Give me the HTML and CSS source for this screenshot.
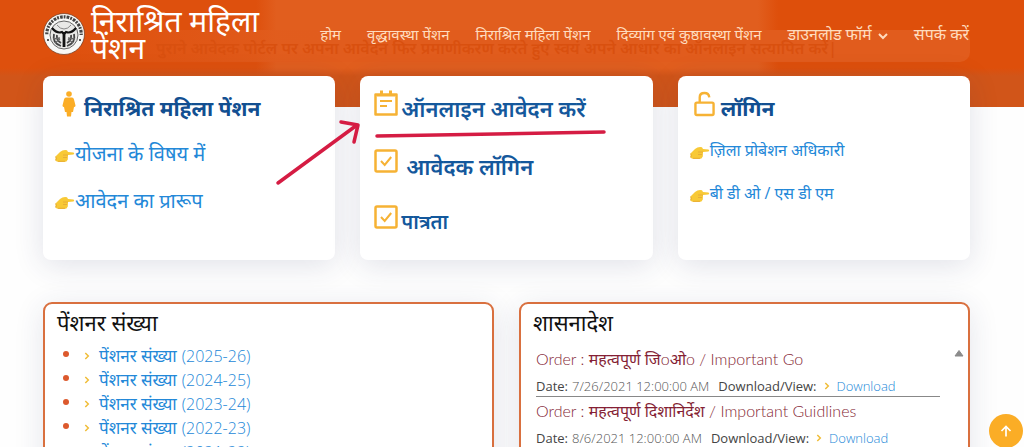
FILE: index.html
```html
<!DOCTYPE html>
<html lang="hi">
<head>
<meta charset="utf-8">
<meta name="viewport" content="width=device-width, initial-scale=1">
<title>निराश्रित महिला पेंशन</title>
<link rel="stylesheet" href="styles.css">
</head>
<body>
<svg class="symbols" aria-hidden="true">
  <symbol id="hand" viewBox="0 0 20 14">
    <path d="M1 7 L5 3 Q8 0.500 12 1.300 L13 3 L18.500 3.600 Q20 4.600 18.500 5.600 L13 6 L12.800 10.500 Q12 13 9 13 H4 Q1 13 0.500 11Z" fill="#f8c936"/>
    <path d="M8 6h5M8 8.500h4M3 12.300h7" stroke="#e2a73a" stroke-width="0.800" fill="none"/>
    <path d="M0.500 7.500 Q2 9 0.700 11.500" stroke="#e4aa32" fill="none"/>
  </symbol>
  <symbol id="check" viewBox="0 0 24 24">
    <rect x="1.500" y="1.500" width="21" height="21" rx="1.500" fill="none" stroke="#f6b234" stroke-width="2.500"/>
    <path d="M7 12l3.700 4 6.500-8" fill="none" stroke="#f6b234" stroke-width="2"/>
  </symbol>
  <symbol id="chevron" viewBox="0 0 6 8"><path d="M1.300 1l3 3-3 3" fill="none" stroke="#f0bd38" stroke-width="1.500"/></symbol>
</svg>

<header class="header">
  <p class="notice" aria-hidden="true">पुराने आवेदक पोर्टल पर अपना आवेदन फिर प्रमाणीकरण करते हुए स्वयं अपने आधार का ऑनलाइन सत्यापित करें|</p>
  <div class="bar">
    <svg class="logo" viewBox="0 0 42 42" role="img" aria-label="उत्तर प्रदेश सरकार">
      <circle cx="21" cy="21" r="20.500" fill="#f8f8f6" stroke="#6b3a22" stroke-width="0.700"/>
      <circle cx="21" cy="21" r="17.200" fill="none" stroke="#444" stroke-width="3.200" stroke-dasharray="1.800 1.100 2.700 1" pathLength="106" mask="url(#arc)"/>
      <mask id="arc"><rect width="42" height="22" fill="#fff"/></mask>
      <circle cx="21" cy="22" r="14" fill="#e9e9e7" stroke="#444" stroke-width="0.800"/>
      <path d="M9 15q5 6 10 4l2 2 2-2q5 2 10-4" fill="none" stroke="#111" stroke-width="2.200"/>
      <path d="M21 19v15" stroke="#111" stroke-width="2.800"/>
      <path d="M11 21q-2 9 7 12M31 21q2 9-7 12M14 22q-1 5 4 8M28 22q1 5-4 8" fill="none" stroke="#444" stroke-width="1.800"/>
      <path d="M10 26l7-1M12 30l5-4M32 26l-7-1M30 30l-5-4" stroke="#666" stroke-width="1.300"/>
      <path d="M14 12q3 4 7 4t7-4" fill="none" stroke="#888"/>
      <circle cx="5" cy="27" r="1" fill="#222"/><circle cx="37" cy="27" r="1" fill="#222"/>
    </svg>
    <h1 class="brand">निराश्रित महिला पेंशन</h1>
    <nav class="nav">
      <a href="#">होम</a>
      <a href="#">वृद्धावस्था पेंशन</a>
      <a href="#">निराश्रित महिला पेंशन</a>
      <a href="#">दिव्यांग एवं कुष्ठावस्था पेंशन</a>
      <a class="utility" href="#">डाउनलोड फॉर्म <svg class="caret" viewBox="0 0 10 7"><path d="M1 1l4 4 4-4" fill="none" stroke="currentColor" stroke-width="2"/></svg></a>
      <a class="utility" href="#">संपर्क करें</a>
    </nav>
  </div>
</header>

<main class="main">
  <section class="cards">
    <article class="card">
      <h2 class="card-title scheme">
        <svg class="woman" viewBox="0 0 14 26"><circle cx="7" cy="3" r="2.800" fill="#fbad26"/><path d="M4 6.500h6q1.500 0 2 2l1.500 6q0 1.500-1.500 1.500l-1 5h-1.500l-.5 4.500H5L4.500 21H3l-1-5Q.500 16 .500 14.500L2 8.500q.500-2 2-2Z" fill="#fbad26"/></svg>
        निराश्रित महिला पेंशन
      </h2>
      <ul class="links">
        <li><a href="#"><svg class="hand"><use href="#hand"/></svg>योजना के विषय में</a></li>
        <li><a href="#"><svg class="hand"><use href="#hand"/></svg>आवेदन का प्रारूप</a></li>
      </ul>
    </article>
    <article class="card actions">
      <a class="action first" href="#"><svg class="icon" viewBox="0 0 24 26"><path d="M1.500 4.500h21v20h-21Z" fill="none" stroke="#f6b234" stroke-width="2.500" stroke-linejoin="round"/><path d="M3 4.500h18v2H3ZM6 .500h3v5H6ZM15 .500h3v5h-3Z" fill="#f6b234"/><path d="M6 11h12M6 16h7" stroke="#f6b234" stroke-width="2"/></svg><span>ऑनलाइन आवेदन करें</span></a>
      <a class="action second" href="#"><svg class="icon"><use href="#check"/></svg><span>आवेदक लॉगिन</span></a>
      <a class="action third" href="#"><svg class="icon"><use href="#check"/></svg><span>पात्रता</span></a>
    </article>
    <article class="card">
      <h2 class="card-title">
        <svg class="lock" viewBox="0 0 22 26"><rect x="1.500" y="11.500" width="19" height="13" rx="1.500" fill="none" stroke="#f6b234" stroke-width="2.500"/><path d="M6 11V6q0-4.500 5-4.500 4.500 0 5 4.500" fill="none" stroke="#f6b234" stroke-width="2.500"/></svg>
        लॉगिन
      </h2>
      <ul class="links small">
        <li><a href="#"><svg class="hand"><use href="#hand"/></svg>ज़िला प्रोबेशन अधिकारी</a></li>
        <li><a href="#"><svg class="hand"><use href="#hand"/></svg>बी डी ओ / एस डी एम</a></li>
      </ul>
    </article>
    <svg class="marks" viewBox="0 0 340 80" aria-hidden="true">
      <g fill="none" stroke="#d51c43" stroke-linecap="round" stroke-linejoin="round">
        <path d="M8 67L87 9M71 6l17 3-4 17" stroke-width="3.500"/>
        <path d="M107 20Q200 18 334 16" stroke-width="3.500"/>
      </g>
    </svg>
  </section>

  <section class="panels">
    <article class="panel">
      <h2 class="panel-title">पेंशनर संख्या</h2>
      <ul class="counts">
        <li><a href="#"><svg class="chevron"><use href="#chevron"/></svg>पेंशनर संख्या <span>(2025-26)</span></a></li>
        <li><a href="#"><svg class="chevron"><use href="#chevron"/></svg>पेंशनर संख्या <span>(2024-25)</span></a></li>
        <li><a href="#"><svg class="chevron"><use href="#chevron"/></svg>पेंशनर संख्या <span>(2023-24)</span></a></li>
        <li><a href="#"><svg class="chevron"><use href="#chevron"/></svg>पेंशनर संख्या <span>(2022-23)</span></a></li>
        <li><a href="#"><svg class="chevron"><use href="#chevron"/></svg>पेंशनर संख्या <span>(2021-22)</span></a></li>
      </ul>
    </article>
    <article class="panel">
      <h2 class="panel-title">शासनादेश</h2>
      <div class="orders">
        <div class="order-list">
          <div class="order">
            <p class="order-name">Order : <b>महत्वपूर्ण जि</b>o<b>ओ</b>o / Important Go</p>
            <p class="order-meta"><b>Date:</b><span class="date">7/26/2021 12:00:00 AM</span><b>Download/View:</b><svg class="chevron"><use href="#chevron"/></svg><a href="#">Download</a></p>
          </div>
          <div class="order">
            <p class="order-name">Order : <b>महत्वपूर्ण दिशानिर्देश</b> / Important Guidlines</p>
            <p class="order-meta"><b>Date:</b><span class="date">8/6/2021 12:00:00 AM</span><b>Download/View:</b><svg class="chevron"><use href="#chevron"/></svg><a href="#">Download</a></p>
          </div>
        </div>
        <svg class="scroll-up" viewBox="0 0 10 8"><path d="M1 7L5 1.500 9 7Z" fill="#8b8b8b" stroke="#8b8b8b" stroke-linejoin="round"/></svg>
      </div>
    </article>
  </section>
</main>

<button class="to-top" type="button" aria-label="ऊपर जाएँ"><svg viewBox="0 0 12 12"><path d="M6 11.500V1.500M1.500 6L6 1.500 10.500 6" fill="none" stroke="#fff" stroke-width="1.700"/></svg></button>
</body>
</html>
```
FILE: styles.css
```css
* { box-sizing: border-box; }
html, body { height: 100%; }
body {
  margin: 0;
  overflow: hidden;
  background: #fefefe;
  font-family: "Open Sans", "Noto Sans", "Noto Sans Devanagari", sans-serif;
}
h1, h2, p, ul { margin: 0; padding: 0; font-weight: 400; }
ul { list-style: none; }
a { text-decoration: none; color: #2388d8; }
.symbols { position: absolute; width: 0; height: 0; }

.header {
  position: relative;
  height: 107px;
  padding: 7px 55px 0 43px;
  background:
    linear-gradient(transparent 68px, #d15519 76px),
    linear-gradient(90deg, #de500d 25%, #e15e1e 27%, #e15e1e 74%, #de4f0b 76%);
}
.notice {
  position: absolute;
  left: 50px;
  right: 54px;
  top: 30px;
  height: 32px;
  padding: 4px 0 0 106px;
  border-radius: 0 10px 10px 0;
  background: linear-gradient(90deg, transparent, #e15c1d 30%);
  color: #d9500f;
  font-size: 16px;
  font-weight: 600;
  line-height: 28px;
  white-space: nowrap;
  overflow: hidden;
}
.bar { position: relative; display: flex; align-items: center; }
.logo { flex: none; width: 42px; height: 42px; margin-right: 6px; }
.brand {
  flex: 0 0 184px;
  color: #fff;
  font-size: 30px;
  line-height: 27px;
}
.nav { flex: 1; display: flex; justify-content: flex-end; gap: 26px; white-space: nowrap; }
.nav a { color: #ffdcbf; font-size: 15px; line-height: 24px; }
.nav .utility { font-size: 16px; }
.caret { width: 10px; height: 7px; margin-left: 2px; }

.main { padding: 0 54px 0 43px; }
.cards {
  position: relative;
  display: grid;
  grid-template-columns: repeat(3, 1fr);
  gap: 25px;
  margin-top: -31px;
}
.card {
  height: 184px;
  padding: 14px 12px;
  border-radius: 8px;
  background: #fff;
  box-shadow: 0 5px 30px rgba(40, 50, 100, 0.14);
}
.card-title {
  display: flex;
  align-items: center;
  gap: 6px;
  padding-left: 4px;
  color: #124f91;
  font-size: 21px;
  font-weight: 700;
  line-height: 36px;
}
.scheme { padding-left: 7px; gap: 8px; }
.woman { width: 14px; height: 26px; margin-bottom: 8px; }
.lock { width: 21px; height: 26px; margin-bottom: 8px; }
.links { display: grid; gap: 16px; padding-top: 12px; }
.links a { display: flex; align-items: center; font-size: 20px; line-height: 31px; }
.links.small { gap: 12px; padding-top: 9px; }
.links.small a { font-size: 16px; }
.hand { width: 20px; height: 14px; margin-top: 4px; }

.actions { padding-left: 14px; }
.action { display: flex; gap: 3px; color: #14589c; font-weight: 600; font-size: 22px; line-height: 36px; }
.icon { flex: none; width: 24px; height: 26px; }
.second { gap: 8px; padding-top: 22px; }
.third { padding-top: 20px; font-size: 20px; }
.marks { position: absolute; left: 227px; top: 40px; width: 340px; height: 80px; pointer-events: none; }

.panels { display: grid; grid-template-columns: 1fr 1fr; gap: 25px; margin-top: 42px; }
.panel {
  height: 260px;
  padding: 1px 12px;
  border: 2px solid #d9703f;
  border-radius: 9px;
  background: #fff;
  box-shadow: 0 5px 30px rgba(40, 50, 100, 0.12);
}
.panel-title { color: #111; font-size: 22px; line-height: 34px; }
.counts { padding: 3px 0 0 25px; list-style: disc; }
.counts li { color: #dc592d; font-size: 17px; line-height: 24px; height: 24px; padding-left: 2px; }
.counts a { display: flex; align-items: center; gap: 5px; height: 24px; }
.counts span { font-size: 16px; font-weight: 300; }
.chevron { flex: none; width: 6px; height: 8px; }
.counts .chevron { margin-right: 4px; }

.orders { display: flex; gap: 14px; align-items: flex-start; padding: 6px 0 0 3px; margin-right: -8px; }
.order-list { flex: 1; }
.order { border-bottom: 1px solid #888; }
.order-name { color: #851f35; font-family: Lato, "Noto Sans", sans-serif; font-size: 16px; font-weight: 300; line-height: 28px; }
.order-name b { font-weight: 400; }
.order-meta { display: flex; align-items: center; color: #555; font-size: 13px; font-weight: 300; line-height: 20px; padding-top: 3px; }
.order-meta b { color: #444; font-weight: 400; }
.order-meta .chevron { margin: 0 7px; }
.order-meta a { font-size: 13px; }
.date { margin: 0 9px 0 4px; }
.scroll-up { width: 10px; height: 8px; margin-top: 4px; }

.to-top {
  position: fixed;
  right: 1px;
  bottom: -1px;
  display: grid;
  place-items: center;
  width: 34px;
  height: 34px;
  padding: 0;
  border: 0;
  border-radius: 50%;
  background: #fbad26;
}
.to-top svg { width: 12px; height: 12px; }
```
